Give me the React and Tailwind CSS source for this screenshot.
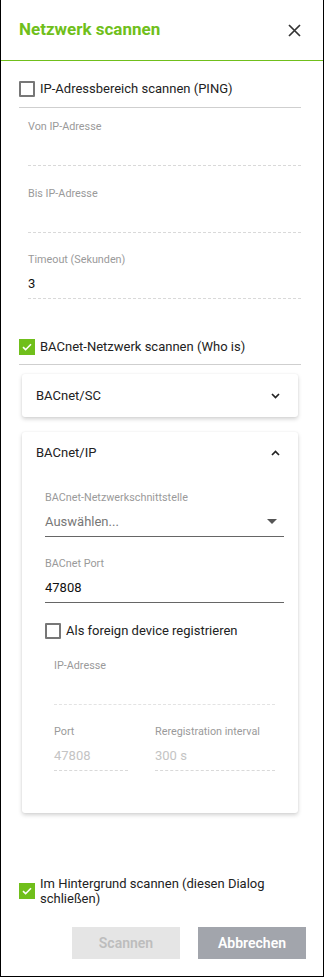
import React from 'react'

function Checkbox({ checked }) {
  if (checked) {
    return (
      <span className="w-4 h-4 shrink-0 bg-[#70bf1b] flex items-center justify-center">
        <svg width="10" height="8" viewBox="0 0 10 8">
          <path d="M1 4.2l2.6 2.5L9 1.2" fill="none" stroke="#fff" strokeWidth="1.6" />
        </svg>
      </span>
    )
  }
  return <span className="w-4 h-4 shrink-0 border-2 border-[#777] rounded-[1px] bg-white" />
}

function Field({ label, value, pt = 'pt-[20px]', disabled }) {
  return (
    <div className={pt}>
      <div className="text-[10.8px] leading-[13px] text-[#9a9a9a]">{label}</div>
      <div
        className={`h-[33px] pt-[3px] flex items-center border-b border-dashed border-[#d9d9d9] text-[13px] ${disabled ? 'text-[#c4c4c4]' : 'text-[#111]'}`}
      >
        {value}
      </div>
    </div>
  )
}

function Chevron({ up }) {
  return (
    <svg width="9" height="6" viewBox="0 0 9 6" className="mr-[18px]">
      <path d={up ? 'M1 5L4.5 1.5 8 5' : 'M1 1L4.5 4.5 8 1'} fill="none" stroke="#222" strokeWidth="1.7" />
    </svg>
  )
}

const cardShadow = 'shadow-[0_2px_4px_rgba(0,0,0,0.18),0_0_2px_rgba(0,0,0,0.06)]'

export default function App() {
  return (
    <div
      className="w-[324px] h-[977px] bg-white border-l border-r border-b border-black flex flex-col text-[#222]"
      style={{ fontFamily: 'Roboto, "Liberation Sans", sans-serif' }}
    >
      <div className="h-[61px] shrink-0 flex items-center justify-between pl-[18px] pr-[22px] border-b border-[#70bf1b]">
        <h1 className="text-[17px] font-bold text-[#70bf1b]">Netzwerk scannen</h1>
        <svg width="13" height="13" viewBox="0 0 13 13">
          <path d="M1 1l11 11M12 1L1 12" stroke="#333" strokeWidth="1.7" />
        </svg>
      </div>

      <div className="pl-[18px] pr-[22px] flex flex-col">
        <div className="flex items-center gap-[5px] h-[24px] mt-[16px]">
          <Checkbox />
          <span className="text-[13px]">IP-Adressbereich scannen (PING)</span>
        </div>
        <div className="h-px bg-[#cfcfcf] mt-[6px]" />

        <div className="pl-[9px]">
          <Field pt="pt-[12px]" label="Von IP-Adresse" value="" />
          <Field pt="pt-[21px]" label="Bis IP-Adresse" value="" />
          <Field label="Timeout (Sekunden)" value="3" />
        </div>

        <div className="flex items-center gap-[5px] h-[24px] mt-[36px]">
          <Checkbox checked />
          <span className="text-[13px]">BACnet-Netzwerk scannen (Who is)</span>
        </div>
        <div className="h-px bg-[#cfcfcf] mt-[5px]" />

        <div className={`mx-[3px] mt-[9px] h-[43px] bg-white rounded-[3px] ${cardShadow} flex items-center justify-between pl-[14px]`}>
          <span className="text-[13px]">BACnet/SC</span>
          <Chevron />
        </div>

        <div className={`mx-[3px] mt-[15px] bg-white rounded-[3px] ${cardShadow} pb-[42px]`}>
          <div className="h-[42px] flex items-center justify-between pl-[14px]">
            <span className="text-[13px]">BACnet/IP</span>
            <Chevron up />
          </div>
          <div className="pl-[23px] pr-[14px]">
            <div className="pt-[17px]">
              <div className="text-[10.8px] leading-[13px] text-[#9a9a9a]">BACnet-Netzwerkschnittstelle</div>
              <div className="h-[33px] pt-[3px] flex items-center justify-between border-b border-[#666] text-[13px] text-[#777]">
                <span>Auswählen...</span>
                <svg width="10" height="5" viewBox="0 0 10 5" className="mr-[7px]">
                  <path d="M0 0h10L5 5z" fill="#555" />
                </svg>
              </div>
            </div>
            <div className="pt-[20px]">
              <div className="text-[10.8px] leading-[13px] text-[#9a9a9a]">BACnet Port</div>
              <div className="h-[33px] pt-[3px] flex items-center border-b border-[#666] text-[13px] text-[#111]">47808</div>
            </div>
            <div className="flex items-center gap-[5px] h-[24px] mt-[16px]">
              <Checkbox />
              <span className="text-[13px]">Als foreign device registrieren</span>
            </div>
            <div className="pl-[9px] pr-[9px]">
              <div className="pt-[16px]">
                <div className="text-[10.8px] leading-[13px] text-[#9a9a9a]">IP-Adresse</div>
                <div className="h-[33px] border-b border-dashed border-[#e3e3e3]" />
              </div>
              <div className="flex gap-[27px]">
                <div className="w-[74px]">
                  <Field label="Port" value="47808" disabled />
                </div>
                <div className="flex-1">
                  <Field label="Reregistration interval" value="300 s" disabled />
                </div>
              </div>
            </div>
          </div>
        </div>
      </div>

      <div className="mt-auto pl-[18px] pr-[17px] pb-[17px]">
        <div className="flex items-center gap-[5px]">
          <Checkbox checked />
          <span className="text-[13px] leading-[15px] pr-[4px]">Im Hintergrund scannen (diesen Dialog schließen)</span>
        </div>
        <div className="flex justify-end gap-[18px] mt-[21px]">
          <button className="w-[108px] h-[32px] bg-[#e5e5e5] text-[#bdbdbd] text-[14px] font-semibold">Scannen</button>
          <button className="w-[108px] h-[32px] bg-[#a2a5ac] text-white text-[14px] font-semibold">Abbrechen</button>
        </div>
      </div>
    </div>
  )
}
